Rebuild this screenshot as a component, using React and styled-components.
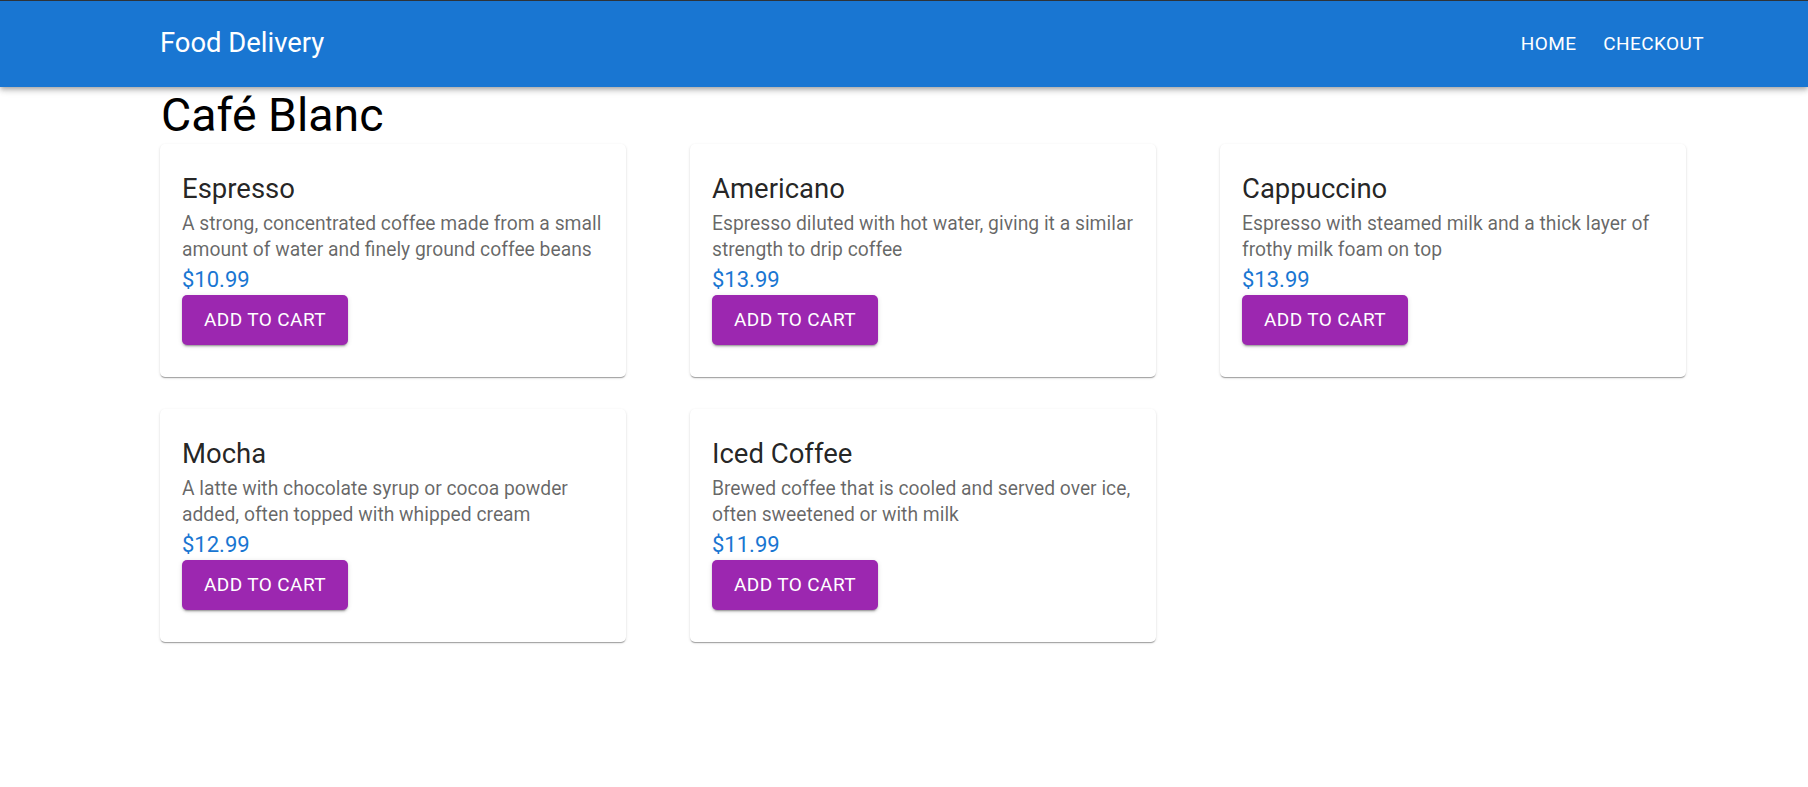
import React from "react";
import styled, { createGlobalStyle } from "styled-components";

const GlobalStyle = createGlobalStyle`
  html, body {
    margin: 0;
    padding: 0;
    background: #ffffff;
    font-family: Roboto, "Noto Sans", "Liberation Sans", sans-serif;
  }
  * { box-sizing: border-box; }
`;

const AppBar = styled.header`
  height: 87px;
  background: #1976d2;
  border-top: 1px solid #2e3338;
  color: #ffffff;
  display: flex;
  align-items: center;
  justify-content: space-between;
  padding: 0 95px 0 160px;
  box-shadow: 0px 2px 4px -1px rgba(0,0,0,0.2), 0px 4px 5px 0px rgba(0,0,0,0.14), 0px 1px 10px 0px rgba(0,0,0,0.12);
  position: relative;
  z-index: 2;
`;

const Brand = styled.div`
  font-size: 27.4px;
  font-weight: 400;
  line-height: 1.3;
`;

const Nav = styled.nav`
  display: flex;
  align-items: center;
  gap: 9px;
`;

const NavButton = styled.button`
  background: transparent;
  border: 0;
  color: #ffffff;
  font-family: inherit;
  font-size: 19px;
  font-weight: 400;
  letter-spacing: 0.4px;
  text-transform: uppercase;
  padding: 8px 9px;
  line-height: 1.5;
  cursor: pointer;
`;

const Main = styled.main`
  padding: 0 122px 40px 160px;
`;

const Heading = styled.h1`
  margin: 2px 0 0 1px;
  font-size: 46.4px;
  font-weight: 400;
  line-height: 53px;
  color: #000000;
`;

const Grid = styled.div`
  display: grid;
  grid-template-columns: repeat(3, 466px);
  column-gap: 64px;
  row-gap: 32px;
  margin-top: 2px;
`;

const Card = styled.div`
  background: #ffffff;
  border-radius: 5px;
  box-shadow: 0px 2px 1px -1px rgba(0,0,0,0.2), 0px 1px 1px 0px rgba(0,0,0,0.14), 0px 1px 3px 0px rgba(0,0,0,0.12);
  padding: 27px 22px 32px;
  display: flex;
  flex-direction: column;
  align-items: flex-start;
`;

const Title = styled.h2`
  margin: 0 0 4px;
  font-size: 27.5px;
  font-weight: 400;
  line-height: 35.6px;
  color: rgba(0,0,0,0.87);
`;

const Description = styled.p`
  margin: 0;
  font-size: 19.3px;
  line-height: 26.67px;
  color: rgba(0,0,0,0.6);
`;

const Price = styled.div`
  font-size: 22px;
  line-height: 31px;
  color: #1976d2;
`;

const CartButton = styled.button`
  height: 50px;
  padding: 0 22px;
  border: 0;
  border-radius: 5px;
  background: #9c27b0;
  color: #ffffff;
  font-family: inherit;
  font-size: 19px;
  font-weight: 400;
  letter-spacing: 0.4px;
  text-transform: uppercase;
  box-shadow: 0px 3px 1px -2px rgba(0,0,0,0.2), 0px 2px 2px 0px rgba(0,0,0,0.14), 0px 1px 5px 0px rgba(0,0,0,0.12);
  cursor: pointer;
`;

const items = [
  { name: "Espresso", desc: "A strong, concentrated coffee made from a small amount of water and finely ground coffee beans", price: "$10.99" },
  { name: "Americano", desc: "Espresso diluted with hot water, giving it a similar strength to drip coffee", price: "$13.99" },
  { name: "Cappuccino", desc: "Espresso with steamed milk and a thick layer of frothy milk foam on top", price: "$13.99" },
  { name: "Mocha", desc: "A latte with chocolate syrup or cocoa powder added, often topped with whipped cream", price: "$12.99" },
  { name: "Iced Coffee", desc: "Brewed coffee that is cooled and served over ice, often sweetened or with milk", price: "$11.99" },
];

export default function App() {
  return (
    <>
      <GlobalStyle />
      <AppBar>
        <Brand>Food Delivery</Brand>
        <Nav>
          <NavButton>Home</NavButton>
          <NavButton>Checkout</NavButton>
        </Nav>
      </AppBar>
      <Main>
        <Heading>Café Blanc</Heading>
        <Grid>
          {items.map((it) => (
            <Card key={it.name}>
              <Title>{it.name}</Title>
              <Description>{it.desc}</Description>
              <Price>{it.price}</Price>
              <CartButton>Add to cart</CartButton>
            </Card>
          ))}
        </Grid>
      </Main>
    </>
  );
}
